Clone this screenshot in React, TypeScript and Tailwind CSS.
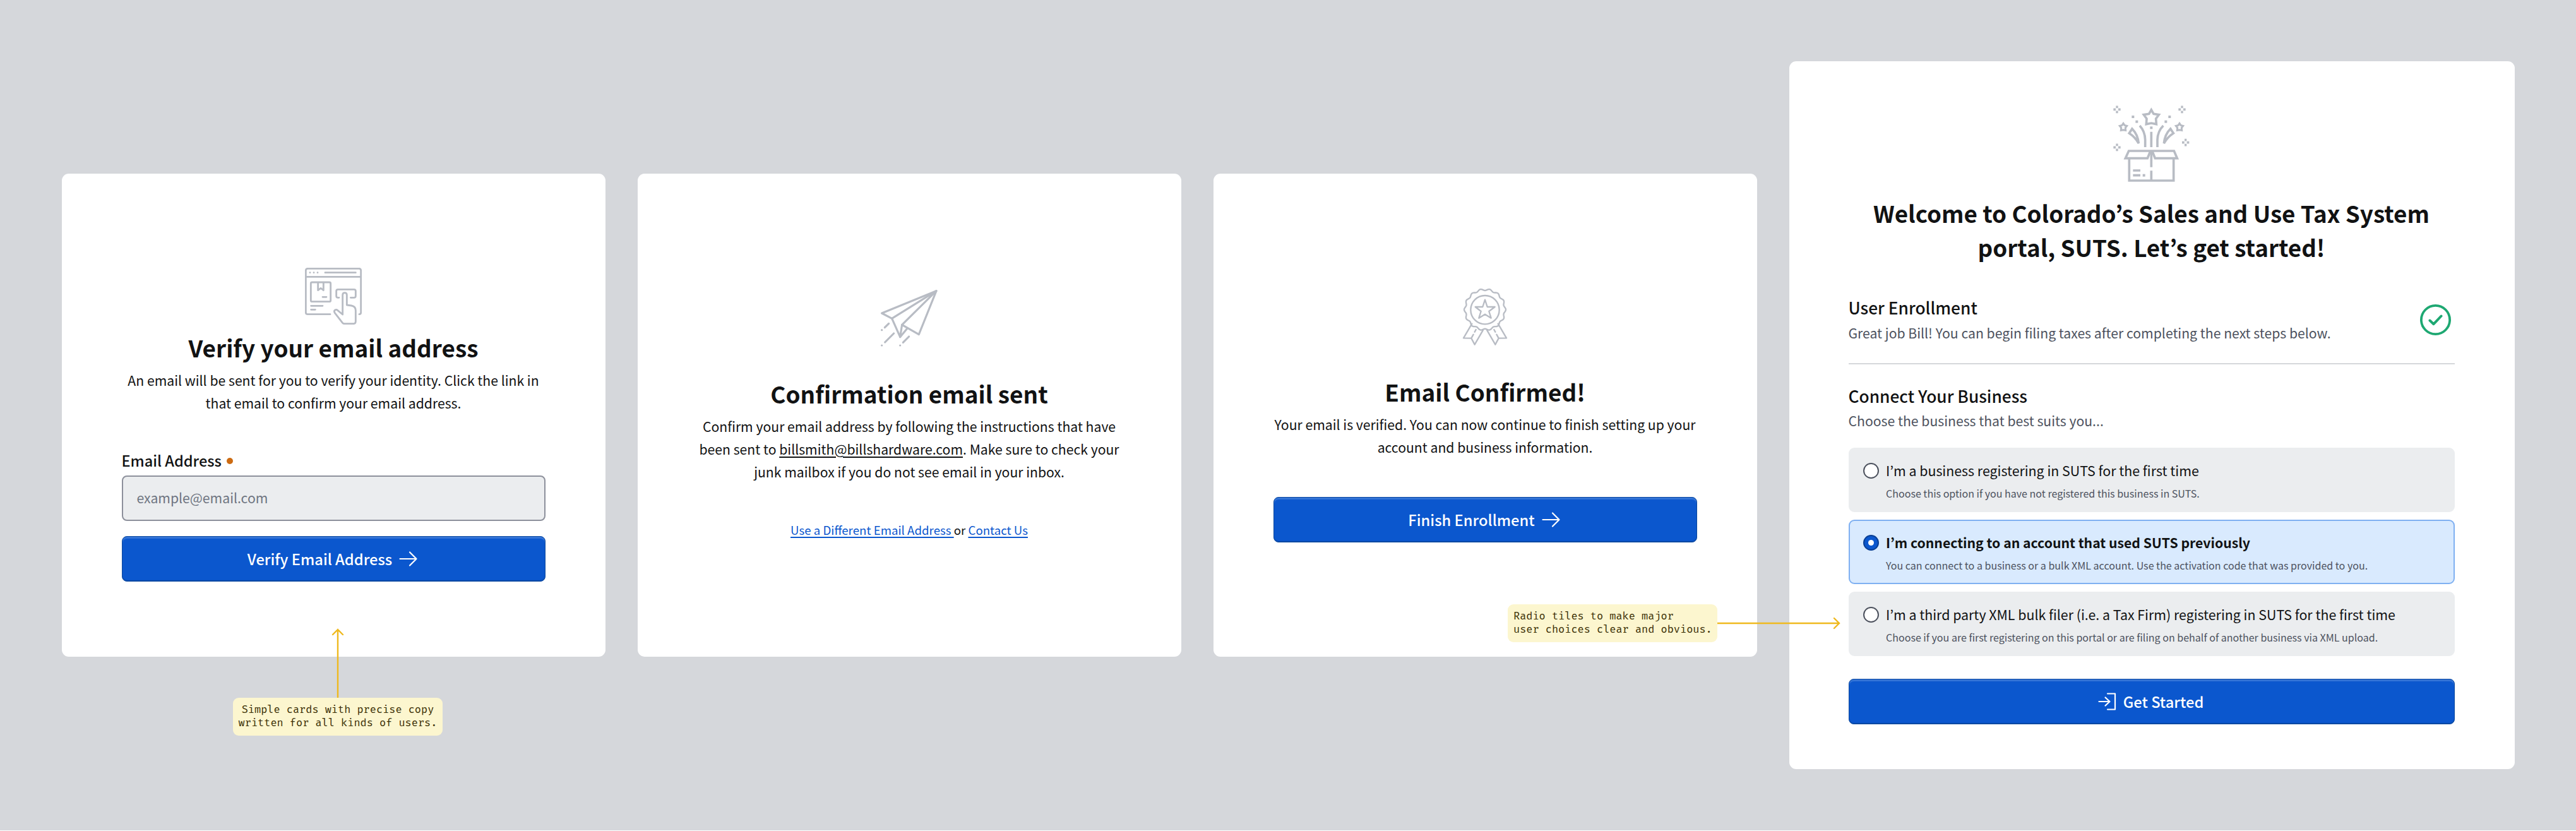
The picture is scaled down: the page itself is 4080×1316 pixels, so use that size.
import React from 'react'

type Option = {
  title: string
  note: string
  selected?: boolean
}

const options: Option[] = [
  {
    title: 'I’m a business registering in SUTS for the first time',
    note: 'Choose this option if you have not registered this business in SUTS.',
  },
  {
    title: 'I’m connecting to an account that used SUTS previously',
    note: 'You can connect to a business or a bulk XML account. Use the activation code that was provided to you.',
    selected: true,
  },
  {
    title: 'I’m a third party XML bulk filer (i.e. a Tax Firm) registering in SUTS for the first time',
    note: 'Choose if you are first registering on this portal or are filing on behalf of another business via XML upload.',
  },
]

const BrowserIcon = () => (
  <svg viewBox="39 41 270 270" className="size-[90px] shrink-0 fill-none stroke-[#b8bcc4] stroke-[8.5]" strokeLinecap="round" strokeLinejoin="round">
    <path d="M159 262H52q-9 0-9-9V54q0-9 9-9H296q9 0 9 9V253q0 9-8 9M43 84H305M135 64H280" />
    <path d="M63 64h.1M81 64h.1M99 64h.1" />
    <rect x="67" y="110" width="94" height="92" rx="6" />
    <path d="M101 112V148L114 138L127 148V112M123 180H141M68 222H123M68 240H88" />
    <path d="M201 183h-5q-8 0-8-8V152q0-8 8-8H272q8 0 8 8V175q0 8-8 8H256" />
    <path d="M218 263V171q0-11 10-11q10 0 10 11V218L260 221q20 4 20 23V295q0 12-12 12H227q-7 0-11-6L181 256q-6-9 1-14q6-4 12 1Z" />
  </svg>
)

const PlaneIcon = () => (
  <svg viewBox="45 57 270 270" className="size-[90px] shrink-0 fill-none stroke-[#b8bcc4] stroke-[9.5]" strokeLinecap="round" strokeLinejoin="round">
    <path d="M50 168L309 62L226 269L146 223L137 281L98 193Z" />
    <path d="M98 193L309 62L146 223M137 281L171 240" />
    <path d="M64 236L83 217M65 306L107 264M151 307L179 279" />
    <path d="M50 248h.1M50 321h.1M137 321h.1" />
  </svg>
)

// wavy seal outline with 14 bumps around (157, 150)
const seal = Array.from({ length: 168 }, (_, i) => {
  const a = (i / 168) * Math.PI * 2
  const r = 95 - 4 * Math.cos(14 * a)
  return `${(157 + r * Math.sin(a)).toFixed(1)},${(150 - r * Math.cos(a)).toFixed(1)}`
}).join(' ')

const AwardIcon = () => (
  <svg viewBox="22 50 270 270" className="size-[90px] shrink-0 fill-none stroke-[#b8bcc4] stroke-[7]" strokeLinecap="round" strokeLinejoin="round">
    <polygon points={seal} />
    <circle cx="157" cy="151" r="68" />
    <path d="M157 103L168 137H204L176 158L186 190L157 172L128 190L138 158L111 137H146Z" />
    <path d="M95 217L55 285L92 286L108 316L148 247M92 286L102 268M108 256L114 245" />
    <path d="M219 217L259 285L222 286L206 316L166 247M222 286L212 268M206 256L200 245" />
  </svg>
)

const sparkles = [[71, 71], [380, 71], [397, 228], [71, 251]]
const confetti = [[147, 106], [165, 129], [321, 106], [303, 129], [234, 158], [199, 384]]

const BoxIcon = () => (
  <svg viewBox="53 52 363 363" className="size-[121px] shrink-0 fill-none stroke-[#b8bcc4] stroke-[11]">
    <path d="M129 303V409H340V303M127 268H230L216 303H111ZM238 268H342L357 303H252Z" />
    <path d="M234 268V345M234 362V409M147 361H182M147 384H182" />
    <path d="M234 177V250M205 250V215Q204 175 179 148M263 250V215Q264 175 291 148" />
    <path d="M143 163Q170 190 174 232Q157 202 129 184ZM325 163Q298 190 294 232Q311 202 339 184Z" />
    <path d="M234 73L245 92L270 96L256 115L258 141L234 136L210 141L212 115L198 96L223 92Z" />
    <path d="M101 137L107 146L118 149L111 158L112 170L101 168L90 170L91 158L84 149L95 146Z" className="stroke-[9]" />
    <path d="M368 137L374 146L385 149L378 158L379 170L368 168L357 170L358 158L351 149L362 146Z" className="stroke-[9]" />
    {confetti.map(([x, y]) => (
      <path key={`${x}-${y}`} d={`M${x - 6} ${y}h12`} className="stroke-[12]" />
    ))}
    {sparkles.map(([x, y]) => (
      <path key={`${x}-${y}`} d={`M${x - 17} ${y}h11M${x + 6} ${y}h11M${x - 5} ${y - 12}h10M${x - 5} ${y + 12}h10`} className="stroke-[11]" />
    ))}
  </svg>
)

const ArrowRight = () => (
  <svg viewBox="0 0 30 26" className="h-[26px] w-[30px] fill-none stroke-white stroke-[2.2]" strokeLinecap="round" strokeLinejoin="round">
    <path d="M1.5 13H27.5M17 2.5L27.5 13L17 23.5" />
  </svg>
)

const EnterIcon = () => (
  <svg viewBox="0 0 29 28" className="h-7 w-[29px] fill-none stroke-white stroke-[2.2]" strokeLinecap="round" strokeLinejoin="round">
    <path d="M15 1.5H27V26.5H15M1.5 14H18.5M11.5 7.5L18.5 14L11.5 20.5" />
  </svg>
)

const Button = ({ children }: { children: React.ReactNode }) => (
  <button
    type="button"
    className="flex h-[72px] w-full shrink-0 items-center justify-center gap-[11px] rounded-[8px] border-[1.5px] border-[#0a479f] bg-[#0b57ce] pr-[2px] text-[23.7px] leading-8 font-medium text-white shadow-[inset_0_3px_1px_#3474d6,inset_0_-1px_1px_#0a479f]"
  >
    {children}
  </button>
)

const Card = ({ children, className }: { children: React.ReactNode; className: string }) => (
  <section className={`flex h-[765px] w-[861px] shrink-0 flex-col items-center rounded-[11px] bg-white px-[95px] text-center ${className}`}>
    {children}
  </section>
)

const Title = ({ children, className }: { children: React.ReactNode; className: string }) => (
  <h2 className={`text-[36.9px] leading-[48px] font-bold whitespace-nowrap ${className}`}>{children}</h2>
)

const Text = ({ children }: { children: React.ReactNode }) => (
  <p className="mt-[10px] text-[21.2px] leading-[35.9px] whitespace-nowrap">{children}</p>
)

const RadioTile = ({ title, note, selected }: Option) => (
  <label
    className={`flex h-[102px] gap-[11px] rounded-[9px] border-2 pt-[18px] pl-[21.5px] ${
      selected ? 'border-[#7fb0f1] bg-[#d9eafe]' : 'border-[#ebedef] bg-[#ebedef]'
    }`}
  >
    <span
      className={`mt-[4px] flex size-[25px] shrink-0 items-center justify-center rounded-full border-2 ${
        selected ? 'border-[#0a3f94] bg-[#0b57ce]' : 'border-[#4d525e] bg-white'
      }`}
    >
      {selected && <span className="size-[9px] rounded-full bg-white" />}
    </span>
    <span className="flex flex-col whitespace-nowrap">
      <span className={`leading-8 ${selected ? 'text-[21.2px] font-bold' : 'text-[21.35px]'}`}>{title}</span>
      <span className="mt-[8px] text-[16.05px] leading-6 text-[#4d525e]">{note}</span>
    </span>
  </label>
)

export default function App() {
  return (
    <main className="relative flex h-[1315px] w-[4080px] items-center gap-[51px] overflow-hidden bg-[#d5d7db] pl-[97.5px] font-['Noto_Sans_CJK_KR',sans-serif] text-[#111213]">
      <Card className="pt-[149px]">
        <BrowserIcon />
        <Title className="mt-[12px]">Verify your email address</Title>
        <Text>
          An email will be sent for you to verify your identity. Click the link in
          <br />
          that email to confirm your email address.
        </Text>
        <div className="mt-[57px] flex w-full items-center gap-[8px] text-[23.5px] leading-8 font-medium">
          Email Address
          <span className="mt-[3px] size-[10px] rounded-full bg-[#cc6b12]" />
        </div>
        <div className="mt-[8px] mb-6 flex h-[72px] w-full shrink-0 items-center rounded-[8px] border-2 border-[#8d909b] bg-[#ebedef] pb-[1px] pl-[22px] text-[21.2px] text-[#6f7581]">
          example@email.com
        </div>
        <Button>
          Verify Email Address
          <ArrowRight />
        </Button>
      </Card>

      <Card className="pt-[184px]">
        <PlaneIcon />
        <Title className="mt-[50px]">Confirmation email sent</Title>
        <Text>
          Confirm your email address by following the instructions that have
          <br />
          been sent to <span className="underline decoration-2 underline-offset-[3px]">billsmith@billshardware.com</span>. Make sure to check your
          <br />
          junk mailbox if you do not see email in your inbox.
        </Text>
        <p className="mt-[60px] text-[18.7px] leading-7 whitespace-nowrap">
          <a className="whitespace-pre text-[#0b57ce] underline decoration-[1.5px] underline-offset-[3px]">Use a Different Email Address </a>
          or <a className="text-[#0b57ce] underline decoration-[1.5px] underline-offset-[3px]">Contact Us</a>
        </p>
      </Card>

      <Card className="pt-[182px]">
        <AwardIcon />
        <Title className="mt-[49px]">Email Confirmed!</Title>
        <Text>
          Your email is verified. You can now continue to finish setting up your
          <br />
          account and business information.
        </Text>
        <div className="mt-[61px] w-full">
          <Button>
            Finish Enrollment
            <ArrowRight />
          </Button>
        </div>
      </Card>

      <section className="flex h-[1121px] w-[1149px] shrink-0 flex-col items-stretch rounded-[11px] bg-white pt-[70px] pr-[95px] pl-[94px]">
        <div className="flex justify-center">
          <BoxIcon />
        </div>
        <h1 className="mt-[22px] text-center text-[36.8px] leading-[54.4px] font-bold whitespace-nowrap">
          Welcome to Colorado’s Sales and Use Tax System
          <br />
          portal, SUTS. Let’s get started!
        </h1>

        <div className="mt-[50px] flex items-center justify-between border-b-2 border-[#d5d7db] pr-[6px] pb-[32px]">
          <div>
            <h3 className="text-[26.3px] leading-9 font-medium">User Enrollment</h3>
            <p className="mt-[6px] text-[21.2px] leading-8 text-[#4d525e]">
              Great job Bill! You can begin filing taxes after completing the next steps below.
            </p>
          </div>
          <svg viewBox="0 0 49 49" className="mt-[2px] size-[49px] fill-none stroke-[#1ea872]" strokeLinecap="round" strokeLinejoin="round">
            <circle cx="24.5" cy="24.5" r="22.6" className="stroke-[3.8]" />
            <path d="M15.5 25.5L21.5 31.2L33.5 18.5" className="stroke-[4]" />
          </svg>
        </div>

        <h3 className="mt-[32px] text-[26.3px] leading-9 font-medium">Connect Your Business</h3>
        <p className="mt-[5px] text-[21.2px] leading-8 text-[#4d525e]">Choose the business that best suits you...</p>

        <div className="mt-[27px] mb-[36px] flex flex-col gap-[12.3px]">
          {options.map((option) => (
            <RadioTile key={option.title} {...option} />
          ))}
        </div>
        <Button>
          <EnterIcon />
          Get Started
        </Button>
      </section>

      {/* Designer notes pinned over the cards */}
      <div className="absolute top-[995px] left-[369px] flex w-[332px] flex-col items-center">
        <svg viewBox="0 0 20 110" className="h-[110px] w-5 fill-none stroke-[#efb91e] stroke-[2.4]" strokeLinecap="round">
          <path d="M10 110V2M2 10L10 2L18 10" />
        </svg>
        <p className="flex h-[60px] w-full items-center justify-center rounded-[9px] bg-[#fcf6cf] text-center font-['Fira_Code','Liberation_Mono',monospace] text-[16.5px] leading-[21px] whitespace-nowrap text-[#3a2e03]">
          Simple cards with precise copy
          <br />
          written for all kinds of users.
        </p>
      </div>
      <div className="absolute top-[957px] left-[2388px] flex items-center">
        <p className="flex h-[60px] w-[332px] items-center rounded-[9px] bg-[#fcf6cf] pl-[9px] font-['Fira_Code','Liberation_Mono',monospace] text-[16.5px] leading-[21px] whitespace-nowrap text-[#3a2e03]">
          Radio tiles to make major
          <br />
          user choices clear and obvious.
        </p>
        <svg viewBox="0 0 195 20" className="h-5 w-[195px] fill-none stroke-[#efb91e] stroke-[2.4]" strokeLinecap="round">
          <path d="M0 10H193M185 2L193 10L185 18" />
        </svg>
      </div>
    </main>
  )
}
